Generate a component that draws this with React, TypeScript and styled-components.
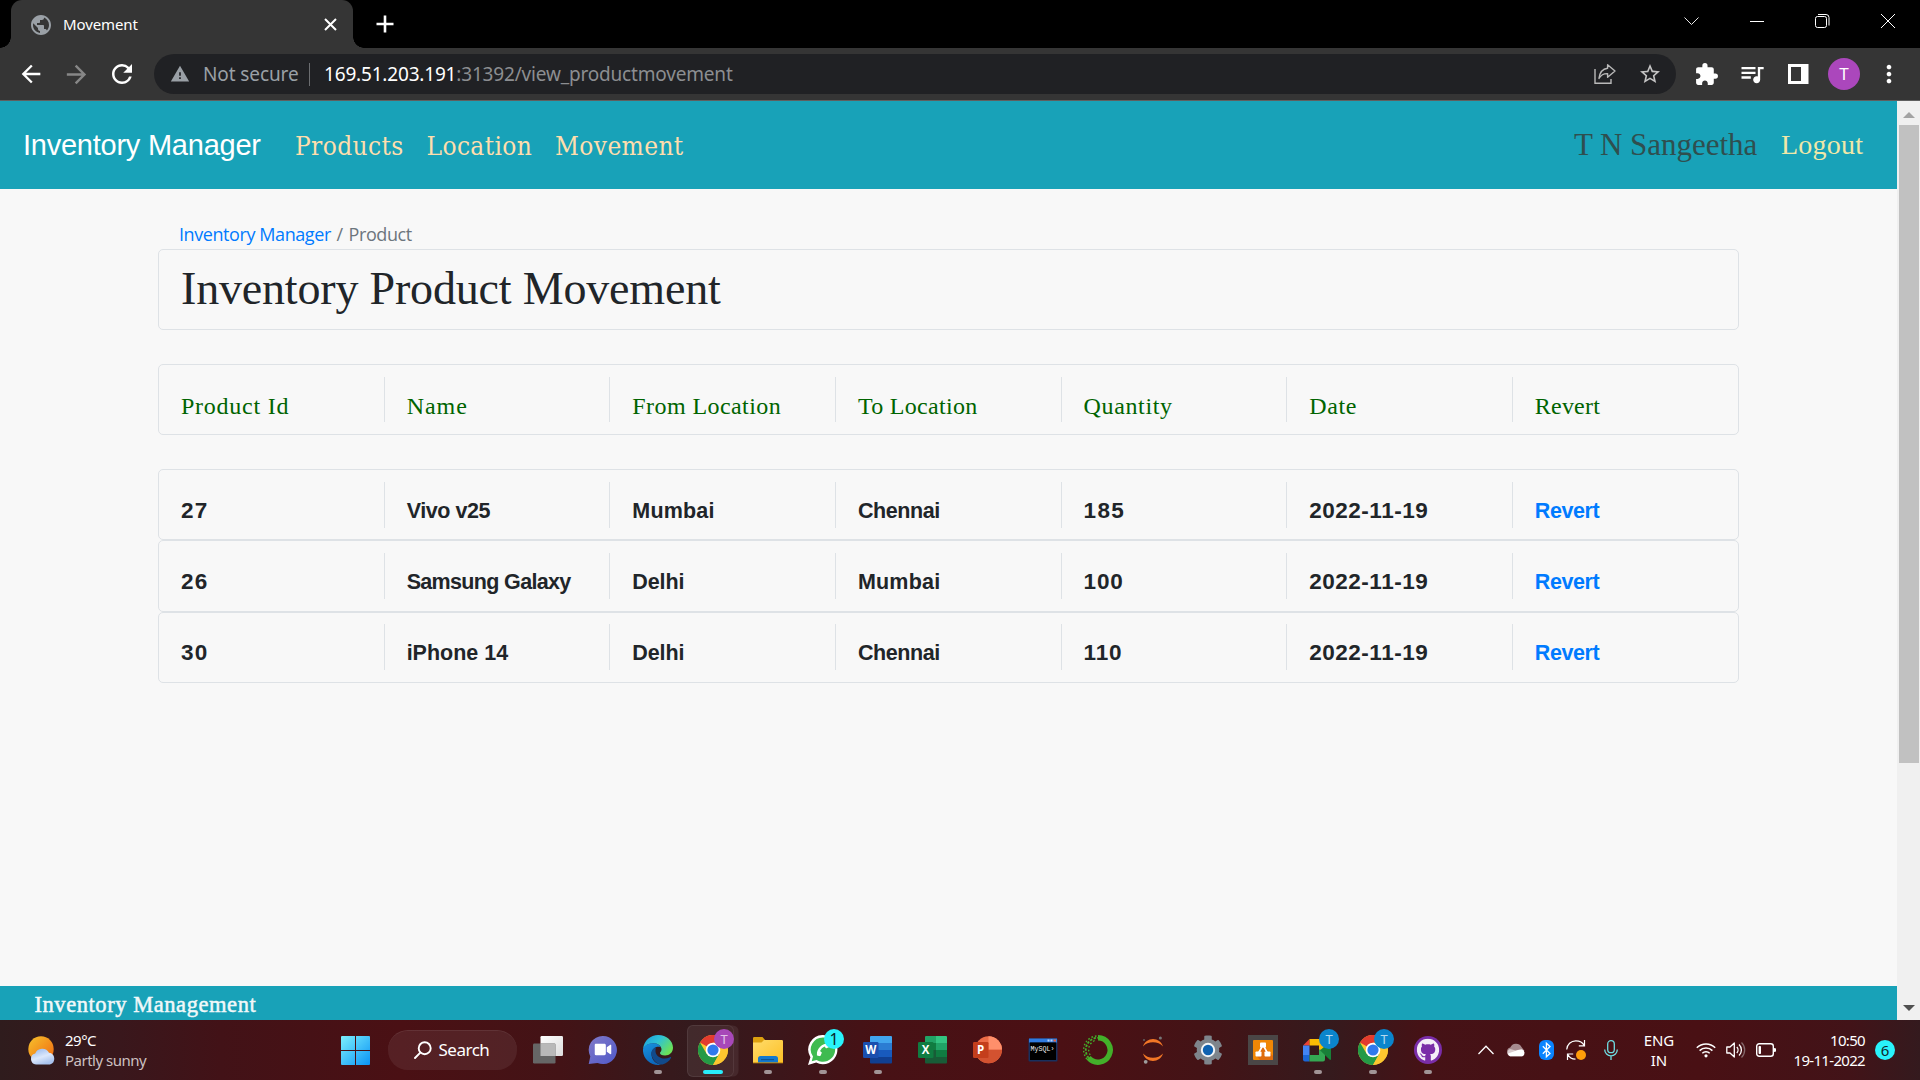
import React from 'react';
import styled, { createGlobalStyle } from 'styled-components';
import {
  MdArrowBack,
  MdArrowForward,
  MdExtension,
  MdMoreVert,
  MdPublic,
  MdQueueMusic,
  MdRefresh,
  MdStarBorder,
  MdWarning,
} from 'react-icons/md';
import { FaCog, FaGithub, FaPhoneAlt, FaVideo } from 'react-icons/fa';

const ui = '"Noto Sans", "Open Sans", sans-serif';
const serif = '"Liberation Serif", serif';
const slab = '"DejaVu Serif Condensed", "DejaVu Serif", serif';
const grotesk = '"Liberation Sans", sans-serif';

const GlobalStyle = createGlobalStyle`
  * { box-sizing: border-box; }
  html, body { margin: 0; padding: 0; overflow: hidden; background: #000; }
  svg { display: block; flex: none; }
`;

const Screen = styled.div`
  width: 1920px;
  height: 1080px;
  display: flex;
  flex-direction: column;
  overflow: hidden;
  font-family: ${ui};
`;

/* ---------- browser chrome ---------- */

const TabStrip = styled.div`
  height: 48px;
  flex: none;
  display: flex;
  background: #000;
  padding-left: 11px;
`;

const Tab = styled.div`
  position: relative;
  width: 342px;
  height: 48px;
  display: flex;
  align-items: center;
  padding: 1px 16px 0 18px;
  background: #353535;
  border-radius: 11px 11px 0 0;
  color: #fff;
  &::before,
  &::after {
    content: '';
    position: absolute;
    bottom: 0;
    width: 11px;
    height: 11px;
  }
  &::before {
    left: -11px;
    background: radial-gradient(circle at 0 0, transparent 10.5px, #353535 11px);
  }
  &::after {
    right: -11px;
    background: radial-gradient(circle at 100% 0, transparent 10.5px, #353535 11px);
  }
`;

const TabTitle = styled.span`
  flex: 1;
  margin-left: 10px;
  padding-bottom: 2px;
  font-size: 15px;
  letter-spacing: -0.1px;
  line-height: 20px;
`;

const NewTab = styled.div`
  display: flex;
  align-items: center;
  padding: 0 0 0 23px;
`;

const WindowButtons = styled.div`
  margin-left: auto;
  display: flex;
  align-items: flex-start;
  padding: 14px 25px 0 0;
  gap: 51px;
`;

const Toolbar = styled.div`
  height: 53px;
  flex: none;
  display: flex;
  align-items: center;
  background: #353535;
  border-bottom: 1px solid #5f5f5f;
  color: #fff;
`;

const NavIcons = styled.div`
  width: 154px;
  display: flex;
  align-items: center;
  padding-left: 17px;
  gap: 16.5px;
  color: #fff;
`;

const Omnibox = styled.div`
  width: 1522px;
  height: 40px;
  display: flex;
  align-items: center;
  padding-left: 16px;
  padding-right: 14px;
  border-radius: 20px;
  background: #202124;
  color: #9aa0a6;
  font-size: 19px;
  line-height: 26px;
  white-space: nowrap;
`;

const SecureLabel = styled.span`
  width: 106px;
  margin-left: 13px;
  letter-spacing: -0.1px;
`;

const Separator = styled.i`
  width: 1px;
  height: 23px;
  background: #6b6d70;
`;

const Url = styled.span`
  margin-left: 14px;
  flex: 1;
  letter-spacing: -0.18px;
  color: #8c8e91;
  b {
    font-weight: 400;
    color: #fff;
  }
`;

const OmniActions = styled.div`
  display: flex;
  align-items: center;
  gap: 22px;
  color: #c4c4c4;
`;

const Extensions = styled.div`
  flex: 1;
  display: flex;
  align-items: center;
  padding-left: 18px;
`;

const Spacer = styled.i<{ $w: number }>`
  width: ${(p) => p.$w}px;
  flex: none;
`;

const Avatar = styled.div`
  width: 32px;
  height: 32px;
  border-radius: 50%;
  background: #ab47bc;
  color: #fff;
  font: 17px/32px ${ui};
  text-align: center;
`;

/* ---------- page ---------- */

const Viewport = styled.div`
  height: 919px;
  flex: none;
  display: flex;
`;

const Page = styled.div`
  width: 1897px;
  display: flex;
  flex-direction: column;
  background: #f8f8f8;
`;

const Navbar = styled.nav`
  height: 88px;
  flex: none;
  display: flex;
  align-items: center;
  padding-left: 23px;
  background: #18a2b8;
  white-space: nowrap;
`;

const Brand = styled.a`
  width: 272px;
  color: #fff;
  font: 29px/36px ${grotesk};
  letter-spacing: -0.24px;
`;

const NavLink = styled.a<{ $w: number }>`
  width: ${(p) => p.$w}px;
  padding-top: 1px;
  color: #ffdead;
  font: 26px/36px ${slab};
  letter-spacing: 0.38px;
`;

const UserName = styled.span`
  margin-left: auto;
  width: 207px;
  color: #2f4f4f;
  font: 31px/36px ${serif};
  letter-spacing: -0.04px;
`;

const Logout = styled.a`
  width: 116px;
  color: #f0e8a8;
  font: 28px/36px ${serif};
  letter-spacing: 0.24px;
`;

const Main = styled.main`
  flex: 1;
  padding: 31px 158px 0;
`;

const Breadcrumb = styled.div`
  height: 29px;
  padding-left: 21px;
  color: #6c757d;
  font: 18px/28px 'Open Sans', sans-serif;
  letter-spacing: -0.42px;
  a {
    color: #007bff;
  }
  span {
    margin: 0 1.5px;
  }
`;

const TitleBox = styled.div`
  width: 1581px;
  height: 81px;
  display: flex;
  align-items: center;
  padding: 0 0 2px 22px;
  border: 1px solid #dee2e6;
  border-radius: 5px;
`;

const Title = styled.h1`
  margin: 0;
  color: #212529;
  font: 400 46px/60px ${serif};
  letter-spacing: -0.18px;
`;

const Row = styled.div<{ $h: number; $mt?: number; $pt?: number }>`
  width: 1581px;
  height: ${(p) => p.$h}px;
  margin-top: ${(p) => p.$mt ?? 0}px;
  padding-top: ${(p) => p.$pt ?? 12}px;
  display: grid;
  grid-template-columns: repeat(6, 225.65px) 1fr;
  align-items: start;
  border: 1px solid #dee2e6;
  border-radius: 5px;
`;

const Cell = styled.div<{ $ls?: number; $drop?: number; $size?: number }>`
  height: 46px;
  display: flex;
  align-items: center;
  padding: ${(p) => 11 + (p.$drop ?? 0)}px 0 0 22px;
  border-right: 1px solid #dee2e6;
  color: #212529;
  font: bold ${(p) => p.$size ?? 21.5}px/28px ${grotesk};
  letter-spacing: ${(p) => p.$ls ?? 0}px;
  white-space: nowrap;
  &:last-child {
    border-right: 0;
  }
`;

const HeadCell = styled(Cell)`
  height: 45px;
  padding-top: 13px;
  color: #006400;
  font: 24px/28px ${serif};
`;

const RevertLink = styled.a`
  color: #007bff;
`;

const PageFooter = styled.footer`
  height: 34px;
  flex: none;
  display: flex;
  align-items: center;
  padding: 4px 0 0 34.5px;
  background: #18a2b8;
  color: #f1f8f9;
  font: 22.5px/28px ${serif};
  letter-spacing: 0.56px;
  -webkit-text-stroke: 0.5px #f1f8f9;
`;

const Scrollbar = styled.div`
  width: 23px;
  display: flex;
  flex-direction: column;
  align-items: center;
  background: #f0f0f0;
`;

const ScrollArrow = styled.div<{ $down?: boolean }>`
  height: 24px;
  display: flex;
  align-items: center;
  padding-top: ${(p) => (p.$down ? 0 : 3)}px;
  margin-top: ${(p) => (p.$down ? 'auto' : 0)};
  padding-left: 1px;
`;

const Thumb = styled.div`
  width: 20px;
  height: 638px;
  margin-left: 1px;
  background: #c1c1c1;
`;

/* ---------- taskbar ---------- */

const Taskbar = styled.div`
  height: 60px;
  flex: none;
  display: flex;
  align-items: center;
  color: #fff;
  background: linear-gradient(
    90deg,
    #2f1c1d 0,
    #39171c 120px,
    #421217 220px,
    #4a1014 400px,
    #431316 560px,
    #341a1d 690px,
    #3c161a 780px,
    #471115 880px,
    #4b1014 1060px,
    #441316 1200px,
    #351a1d 1330px,
    #451216 1420px,
    #491014 1700px,
    #421318 1850px,
    #341a1e 1920px
  );
`;

const Weather = styled.div`
  width: 341px;
  display: flex;
  align-items: center;
  padding-left: 27px;
  gap: 9px;
`;

const Stack = styled.div<{ $align?: string; $w?: number; $ls?: number }>`
  width: ${(p) => (p.$w ? `${p.$w}px` : 'auto')};
  display: flex;
  flex-direction: column;
  text-align: ${(p) => p.$align ?? 'left'};
  font-size: 15px;
  line-height: 20px;
  letter-spacing: ${(p) => p.$ls ?? -0.5}px;
  white-space: nowrap;
`;

const Muted = styled.span`
  color: #cdc0c1;
`;

const SearchPill = styled.div`
  width: 129px;
  height: 40px;
  margin-left: 18px;
  display: flex;
  align-items: center;
  padding: 0 0 2px 26px;
  gap: 6.5px;
  border-radius: 20px;
  border-top: 1px solid rgba(255, 255, 255, 0.08);
  background: rgba(255, 255, 255, 0.07);
  font-size: 17px;
  letter-spacing: -0.5px;
`;

const AppList = styled.div`
  display: flex;
  margin-left: 3px;
`;

const AppSlot = styled.div<{ $active?: boolean }>`
  position: relative;
  width: 55px;
  height: 60px;
  display: flex;
  align-items: center;
  justify-content: center;
  &::before {
    content: '';
    display: ${(p) => (p.$active ? 'block' : 'none')};
    position: absolute;
    left: 2px;
    top: 5px;
    width: 45px;
    height: 50px;
    border-radius: 6px;
    border: 1px solid rgba(255, 255, 255, 0.08);
    background: rgba(255, 255, 255, 0.07);
    box-shadow: 5px 0 0 -0.5px rgba(255, 255, 255, 0.07);
  }
  > svg {
    position: relative;
  }
`;

const Indicator = styled.i<{ $active?: boolean }>`
  position: absolute;
  bottom: 6px;
  left: 50%;
  transform: translateX(-50%);
  width: ${(p) => (p.$active ? 20 : 8)}px;
  height: 4px;
  border-radius: 2px;
  background: ${(p) => (p.$active ? '#29ecfb' : '#a19496')};
`;

const Badge = styled.span<{ $bg: string; $fg: string; $size: number }>`
  position: absolute;
  left: 29px;
  top: 9px;
  width: 20px;
  height: 20px;
  border-radius: 50%;
  background: ${(p) => p.$bg};
  color: ${(p) => p.$fg};
  font: ${(p) => p.$size}px/20px ${ui};
  text-align: center;
`;

const Tray = styled.div`
  margin-left: auto;
  height: 60px;
  display: flex;
  align-items: center;
`;

const Count = styled.div`
  width: 20px;
  height: 20px;
  margin: 0 25px 0 10px;
  border-radius: 50%;
  background: #29f3fb;
  color: #10282a;
  font-size: 15px;
  line-height: 21px;
  text-align: center;
`;

/* ---------- drawings ---------- */

const ShareIcon = () => (
  <svg width="22" height="22" viewBox="0 0 22 22" fill="none" stroke="#b9b9b9" strokeWidth="1.4">
    <path d="M1 6V20.3H17V16" />
    <path d="M13.6 1.8 21 8 13.6 14.2V10.6C9.4 10.4 7 12 5 15.4 5.6 10 8.6 5.8 13.6 5.2Z" strokeLinejoin="round" />
  </svg>
);

const ChromeLogo = () => (
  <svg width="30" height="30" viewBox="0 0 30 30">
    <circle cx="15" cy="15" r="15" fill="#fdc62f" />
    <path d="M15 15 2 7.5A15 15 0 0 1 28 7.5L15 7.8Z" fill="#e33b2e" />
    <path d="M2 7.5A15 15 0 0 0 15 30L21.4 18.7 15 15 8.6 18.8Z" fill="#249a46" />
    <path d="M15 7.8H28.1A15 15 0 0 1 15 30L21.4 18.7Z" fill="#fdc62f" />
    <circle cx="15" cy="15" r="7.3" fill="#fff" />
    <circle cx="15" cy="15" r="5.6" fill="#3079ee" />
  </svg>
);

const TaskViewLogo = () => (
  <svg width="30" height="28" viewBox="0 0 30 28">
    <defs>
      <linearGradient id="tv" x1="0" y1="0" x2="1" y2="1">
        <stop offset="0" stopColor="#fff" />
        <stop offset="1" stopColor="#dcdcdc" />
      </linearGradient>
    </defs>
    <rect x="7.5" y="0" width="22.5" height="20" rx="1.2" fill="url(#tv)" />
    <rect x="0" y="7.5" width="22.5" height="20" rx="1.2" fill="#666" />
    <path d="M7.5 7.5H21.3a1.2 1.2 0 0 1 1.2 1.2V20H7.5Z" fill="#b9b9b9" />
  </svg>
);

const ChatLogo = () => (
  <svg width="30" height="30" viewBox="0 0 30 30">
    <defs>
      <linearGradient id="chat" x1="0" y1="0" x2="1" y2="1">
        <stop offset="0" stopColor="#8079c8" />
        <stop offset="1" stopColor="#5059c9" />
      </linearGradient>
    </defs>
    <path d="M15 1A14 14 0 1 1 9.500 27.900L0.700 29 2.300 21.500A14 14 0 0 1 15 1Z" fill="url(#chat)" />
    <FaVideo x="6.500" y="6" size={17} color="#fff" />
  </svg>
);

const EdgeLogo = () => (
  <svg width="30" height="30" viewBox="0 0 30 30">
    <defs>
      <linearGradient id="edgeTop" x1="0" y1="0" x2="1" y2="0.6">
        <stop offset="0" stopColor="#1a9bdc" />
        <stop offset="0.5" stopColor="#2fc2d6" />
        <stop offset="1" stopColor="#6be257" />
      </linearGradient>
      <linearGradient id="edgeBody" x1="0" y1="0" x2="0.4" y2="1">
        <stop offset="0" stopColor="#1893df" />
        <stop offset="1" stopColor="#0c68bd" />
      </linearGradient>
    </defs>
    <path d="M0 14C1 5.500 7.500 0 15.200 0 23.500 0 30 5.800 30 12.800 30 17.300 26.600 20.500 22 20.500 18.600 20.500 17 19.200 17 18 17 17.200 18.500 16.500 18.500 14.300 18.500 11.300 15.300 8.200 10.500 8.200 5.500 8.200 1.300 11 0 14Z" fill="url(#edgeTop)" />
    <path d="M0 14C1.200 10.600 5 8.200 9.800 8.200 14.500 8.200 17 10.200 17.900 12.200 13.500 10.800 8.500 13.500 8.500 19 8.500 24.500 12.500 29.300 18.500 29.600 8.500 31.500 -0.700 24 0 14Z" fill="url(#edgeBody)" />
    <path d="M13 12.400C8.500 13.600 7.500 18 9.200 22 11 26.600 15 29.800 19.500 29.400 23 28.600 26.400 26 28 23 28.300 22.200 27.700 21.900 27 22.300 20 25.500 13 22 12.500 16.500 12.400 15 12.500 13.600 13 12.400Z" fill="#114a8b" />
  </svg>
);

const FolderLogo = () => (
  <svg width="30" height="28" viewBox="0 0 30 28">
    <defs>
      <linearGradient id="folder" x1="0" y1="0" x2="1" y2="1">
        <stop offset="0" stopColor="#ffdc6b" />
        <stop offset="1" stopColor="#fdbf24" />
      </linearGradient>
    </defs>
    <path d="M0 2.200A1.200 1.200 0 0 1 1.200 1H9.500L12.500 4.500V8H0Z" fill="#dca00f" />
    <path d="M0 6.500H8.500L11 4H28.800A1.200 1.200 0 0 1 30 5.200V27H0Z" fill="url(#folder)" />
    <path d="M5 27V22.500A2.500 2.500 0 0 1 7.500 20H22.500A2.500 2.500 0 0 1 25 22.500V27Z" fill="#1279cf" />
    <rect x="8" y="23" width="13" height="1.200" fill="#0b5596" />
    <rect y="26.300" width="30" height="1" fill="#c98f13" />
  </svg>
);

const WhatsAppLogo = () => (
  <svg width="30" height="30" viewBox="0 0 30 30">
    <path d="M15.200 0A14.600 14.600 0 1 1 8.200 27.600L0 30 2.400 22.200A14.600 14.600 0 0 1 15.200 0Z" fill="#fff" />
    <path d="M15.200 2.400A12.200 12.200 0 1 1 8.600 25L3.700 26.300 5 21.600A12.200 12.200 0 0 1 15.200 2.400Z" fill="#3fbb50" />
    <g transform="rotate(90 15.200 14.700)">
      <FaPhoneAlt x="8.700" y="8.200" size={13} color="#fff" />
    </g>
  </svg>
);

const Letter = styled.text`
  font: bold 11.5px 'Open Sans', sans-serif;
  fill: #fff;
  text-anchor: middle;
`;

const WordLogo = () => (
  <svg width="29" height="28" viewBox="0 0 29 28">
    <path d="M7 1A1 1 0 0 1 8 0H28A1 1 0 0 1 29 1V7H7Z" fill="#41a5ee" />
    <rect x="7" y="7" width="22" height="7" fill="#2b7cd3" />
    <rect x="7" y="14" width="22" height="7" fill="#185abd" />
    <path d="M7 21H29V26.500A1 1 0 0 1 28 27.500H8A1 1 0 0 1 7 26.500Z" fill="#103f91" />
    <rect x="0" y="6" width="15.500" height="16" rx="1.200" fill="#1a4fae" />
    <Letter x="7.700" y="18.200">W</Letter>
  </svg>
);

const ExcelLogo = () => (
  <svg width="29" height="28" viewBox="0 0 29 28">
    <path d="M7 1A1 1 0 0 1 8 0H18V7H7Z" fill="#21a366" />
    <path d="M18 0H28A1 1 0 0 1 29 1V7H18Z" fill="#33c481" />
    <path d="M7 7H18V14H7Z" fill="#107c41" />
    <path d="M18 7H29V14H18Z" fill="#21a366" />
    <path d="M7 14H18V21H7Z" fill="#185c37" />
    <path d="M18 14H29V21H18Z" fill="#107c41" />
    <path d="M7 21H29V26.500A1 1 0 0 1 28 27.500H8A1 1 0 0 1 7 26.500Z" fill="#185c37" />
    <rect x="0" y="6" width="15.500" height="16" rx="1.200" fill="#107c41" />
    <Letter x="7.700" y="18.200">X</Letter>
  </svg>
);

const PowerPointLogo = () => (
  <svg width="29" height="28" viewBox="0 0 29 28">
    <circle cx="15.500" cy="13.700" r="13.500" fill="#ed6c47" />
    <path d="M15.500 0.200A13.500 13.500 0 0 1 29 13.700H15.500Z" fill="#ff8f6b" />
    <path d="M29 13.700A13.500 13.500 0 0 1 2 13.700Z" fill="#d35230" />
    <rect x="0" y="6" width="15.500" height="16" rx="1.200" fill="#c43e1c" />
    <Letter x="7.700" y="18.200">P</Letter>
  </svg>
);

const SqlText = styled.text`
  font: 7.5px 'Liberation Mono', monospace;
  fill: #f0f0f0;
`;

const MySqlLogo = () => (
  <svg width="30" height="24" viewBox="0 0 30 24">
    <rect x="0.500" y="0.500" width="29" height="23" rx="1" fill="#18305e" />
    <rect x="1" y="0.500" width="28" height="4" fill="#2f7be0" />
    <rect x="19.500" y="1.500" width="2" height="2" fill="#b9d4fa" />
    <rect x="22.500" y="1.500" width="2" height="2" fill="#b9d4fa" />
    <rect x="25.500" y="1.500" width="2.500" height="2" fill="#e8643c" />
    <rect x="2" y="4.500" width="26" height="17.500" fill="#000" />
    <SqlText x="2.600" y="12.500" textLength="24" lengthAdjust="spacingAndGlyphs">
      MySQL›
    </SqlText>
  </svg>
);

const AnacondaLogo = () => (
  <svg width="30" height="30" viewBox="0 0 30 30" fill="none" stroke="#43b02a">
    <path d="M15 2.800A12.200 12.200 0 1 1 5.600 22.800" strokeWidth="5.400" />
    <path d="M5.600 22.800A12.200 12.200 0 0 1 15 2.800" strokeWidth="1.800" strokeDasharray="2.300 1.500" />
    <path d="M3.900 24A14 14 0 0 1 14 1" strokeWidth="1.400" strokeDasharray="1.600 2" />
    <path d="M7.200 20A10 10 0 0 1 13 5" strokeWidth="1.300" strokeDasharray="1.800 2" />
  </svg>
);

const JupyterLogo = () => (
  <svg width="22" height="28" viewBox="0 0 22 28">
    <path d="M1 10.500C2.500 5.800 6.500 3 11 3S19.500 5.800 21 10.500C18.500 7.700 15 6.300 11 6.300S3.500 7.700 1 10.500Z" fill="#f37726" />
    <path d="M1 17.500C2.500 22.200 6.500 25 11 25S19.500 22.200 21 17.500C18.500 20.300 15 21.700 11 21.700S3.500 20.300 1 17.500Z" fill="#f37726" />
    <circle cx="18.400" cy="2" r="1.500" fill="#767677" />
    <circle cx="3.700" cy="25.800" r="1.900" fill="#9e9e9e" />
    <circle cx="2" cy="4" r="1" fill="#616262" />
  </svg>
);

const SettingsLogo = () => (
  <svg width="30" height="30" viewBox="0 0 30 30">
    <FaCog size={30} color="#7e858c" />
    <circle cx="15" cy="15" r="7.200" fill="#f2f4f6" />
    <circle cx="15" cy="15" r="5.200" fill="#0f62b0" />
  </svg>
);

const DrawioLogo = () => (
  <svg width="30" height="30" viewBox="0 0 30 30">
    <rect width="30" height="30" fill="#4a4646" />
    <rect x="5" y="5" width="20" height="20" rx="1" fill="#f08705" />
    <path d="M15 10 25 21V24a1 1 0 0 1-1 1H12l-3-4Z" fill="#df6c0c" />
    <path d="M15 10 10.500 18M15 10 19.500 18" stroke="#fff" strokeWidth="1.600" />
    <rect x="12" y="7.500" width="6" height="5" rx="0.800" fill="#fff" />
    <rect x="7.500" y="16.500" width="6" height="5" rx="0.800" fill="#fff" />
    <rect x="16.500" y="16.500" width="6" height="5" rx="0.800" fill="#fff" />
  </svg>
);

const MeetLogo = () => (
  <svg width="29" height="24" viewBox="0 0 29 24">
    <path d="M6.500 1V7.500H0Z" fill="#ea4335" />
    <path d="M6.500 1H20a2 2 0 0 1 2 2V11L16 14V7.500H6.500Z" fill="#fbbc04" />
    <path d="M0 7.500H6.500V17H0Z" fill="#4285f4" />
    <path d="M0 17H6.500V23.500H2a2 2 0 0 1-2-2Z" fill="#1a66d6" />
    <path d="M6.500 17H16V11.500L22 12.500V21.500a2 2 0 0 1-2 2H6.500Z" fill="#34a853" />
    <path d="M17 12.300 26.500 4.500c.7-.5 1.500-.2 1.500.7V21c0 .9-.8 1.200-1.500.6Z" fill="#188038" />
  </svg>
);

const GithubLogo = () => (
  <svg width="28" height="28" viewBox="0 0 28 28">
    <circle cx="14" cy="14" r="14" fill="#7a2da8" />
    <FaGithub x="2.500" y="2.500" size={23} color="#f4eef8" />
  </svg>
);

const PartlySunny = () => (
  <svg width="29" height="30" viewBox="0 0 29 30">
    <defs>
      <linearGradient id="sun" x1="0" y1="0" x2="1" y2="1">
        <stop offset="0" stopColor="#f6c22d" />
        <stop offset="1" stopColor="#f0660f" />
      </linearGradient>
      <linearGradient id="cloud" x1="0" y1="0" x2="0.500" y2="1">
        <stop offset="0" stopColor="#8fb3ec" />
        <stop offset="0.600" stopColor="#dce8fb" />
        <stop offset="1" stopColor="#a9c3ee" />
      </linearGradient>
    </defs>
    <circle cx="14" cy="14" r="12.700" fill="url(#sun)" />
    <path d="M9 29.500A5.600 5.600 0 0 1 8.200 18.500 7.600 7.600 0 0 1 22 17.800 6 6 0 0 1 23 29.500Z" fill="url(#cloud)" />
  </svg>
);

const WindowsLogo = () => (
  <svg width="29" height="29" viewBox="0 0 29 29">
    <defs>
      <linearGradient id="win" gradientUnits="userSpaceOnUse" x1="0" y1="0" x2="29" y2="29">
        <stop offset="0" stopColor="#7cf0fd" />
        <stop offset="1" stopColor="#0a93f5" />
      </linearGradient>
    </defs>
    <path d="M1 0H14V14H0V1A1 1 0 0 1 1 0ZM15 0H28A1 1 0 0 1 29 1V14H15ZM0 15H14V29H1A1 1 0 0 1 0 28ZM15 15H29V28A1 1 0 0 1 28 29H15Z" fill="url(#win)" />
  </svg>
);

const SearchGlyph = () => (
  <svg width="18" height="18" viewBox="0 0 18 18" fill="none" stroke="#fff" strokeWidth="1.900">
    <circle cx="10.700" cy="7.200" r="6" />
    <path d="M6.300 11.600 1 17" strokeLinecap="round" />
  </svg>
);

const BluetoothGlyph = () => (
  <svg width="15" height="20" viewBox="0 0 15 20">
    <rect width="15" height="20" rx="6" fill="#0a84ff" />
    <path d="M3.800 6.300 11 13.500 7.400 16.800V3.200L11 6.500 3.800 13.700" fill="none" stroke="#fff" strokeWidth="1.300" />
  </svg>
);

const CloudGlyph = () => (
  <svg width="20" height="14" viewBox="0 0 20 14">
    <path d="M4.500 13A4.300 4.300 0 0 1 4.300 4.600 6.200 6.200 0 0 1 15.500 4L18.500 8 10 13Z" fill="#a68b8f" />
    <path d="M4 13.200A3.900 3.900 0 0 1 3.800 6L10 7.500 15.600 5.900A4 4 0 0 1 16 13.200Z" fill="#d9cccd" />
    <path d="M4 13.200A3.500 3.500 0 0 1 2 10.500L12 7 16 6.800A3.400 3.400 0 0 1 16.500 13.200Z" fill="#fff" />
  </svg>
);

const SyncGlyph = () => (
  <svg width="20" height="20" viewBox="0 0 20 20" fill="none" stroke="#fff" strokeWidth="1.200">
    <path d="M.7 9.500C1 4.500 5 .8 9.800.8 13.500.8 16.800 2.600 18.200 5.500M18.500 0V5.800H12.800" />
    <path d="M1.500 20V14H7.200M1.800 14.400C3.300 17.400 6 19 9.500 19.200" />
    <circle cx="15" cy="15" r="5" fill="#ff9d0a" stroke="none" />
  </svg>
);

const MicGlyph = () => (
  <svg width="14" height="20" viewBox="0 0 14 20" fill="none" stroke="#6fdde2" strokeWidth="1.300">
    <rect x="3.700" y="0.700" width="6.600" height="12" rx="3.300" />
    <path d="M.7 9.500A6.300 6.300 0 0 0 13.300 9.500M7 16V20" />
  </svg>
);

const WifiGlyph = () => (
  <svg width="20" height="16" viewBox="0 0 20 16" fill="none" stroke="#fff" strokeWidth="1.500">
    <path d="M.8 5.800A13 13 0 0 1 19.200 5.800M3.600 8.600A9 9 0 0 1 16.400 8.600M6.300 11.300A5.200 5.200 0 0 1 13.700 11.300" />
    <circle cx="10" cy="13.800" r="1.600" fill="#fff" stroke="none" />
  </svg>
);

const VolumeGlyph = () => (
  <svg width="20" height="18" viewBox="0 0 20 18" fill="none" stroke="#fff" strokeWidth="1.300">
    <path d="M.8 6H4L8.300 2V16L4 12H.8Z" strokeLinejoin="round" />
    <path d="M10.800 6A4.300 4.300 0 0 1 10.800 12M13 3.500A7.500 7.500 0 0 1 13 14.500" />
    <path d="M15.500 1.500A10.500 10.500 0 0 1 15.500 16.500" stroke="#85686b" />
  </svg>
);

const BatteryGlyph = () => (
  <svg width="20" height="14" viewBox="0 0 20 14" fill="none" stroke="#fff" strokeWidth="1.400">
    <rect x="0.700" y="0.700" width="16.600" height="12.600" rx="2.500" />
    <rect x="2.600" y="3" width="2.400" height="8" rx="0.800" fill="#fff" stroke="none" />
    <path d="M18 5 20 5.500V8.500L18 9Z" fill="#fff" stroke="none" />
  </svg>
);

/* ---------- data ---------- */

const columns: [string, number][] = [
  ['Product Id', 0.75],
  ['Name', 0.97],
  ['From Location', 0.43],
  ['To Location', 0.3],
  ['Quantity', 0.64],
  ['Date', 0.63],
  ['Revert', 0.2],
];

type Movement = { h: number; mt?: number; pt?: number; drop?: number; cells: [string, number][] };

const movements: Movement[] = [
  {
    h: 71,
    mt: 34,
    cells: [['27', 1.2], ['Vivo v25', -0.44], ['Mumbai', 0.2], ['Chennai', -0.43], ['185', 1.3], ['2022-11-19', 0.52]],
  },
  {
    h: 72,
    drop: 1,
    cells: [['26', 1.2], ['Samsung Galaxy', -0.66], ['Delhi', -0.12], ['Mumbai', 0.2], ['100', 0.8], ['2022-11-19', 0.52]],
  },
  {
    h: 71,
    pt: 11,
    drop: 1,
    cells: [['30', 1.2], ['iPhone 14', 0], ['Delhi', -0.12], ['Chennai', -0.43], ['110', 0.8], ['2022-11-19', 0.52]],
  },
];

const isNumeric = (value: string) => /^[\d-]+$/.test(value);

type AppItem = {
  name: string;
  logo: React.ReactNode;
  open?: boolean;
  active?: boolean;
  badge?: { text: string; bg: string; fg: string; size: number };
};

const apps: AppItem[] = [
  { name: 'taskview', logo: <TaskViewLogo /> },
  { name: 'chat', logo: <ChatLogo /> },
  { name: 'edge', logo: <EdgeLogo />, open: true },
  { name: 'chrome', logo: <ChromeLogo />, open: true, active: true, badge: { text: 'T', bg: '#a748b8', fg: '#e3c3e8', size: 13 } },
  { name: 'explorer', logo: <FolderLogo />, open: true },
  { name: 'whatsapp', logo: <WhatsAppLogo />, open: true, badge: { text: '1', bg: '#29f3fb', fg: '#08282a', size: 16 } },
  { name: 'word', logo: <WordLogo />, open: true },
  { name: 'excel', logo: <ExcelLogo /> },
  { name: 'powerpoint', logo: <PowerPointLogo /> },
  { name: 'mysql', logo: <MySqlLogo /> },
  { name: 'anaconda', logo: <AnacondaLogo /> },
  { name: 'jupyter', logo: <JupyterLogo /> },
  { name: 'settings', logo: <SettingsLogo /> },
  { name: 'drawio', logo: <DrawioLogo /> },
  { name: 'meet', logo: <MeetLogo />, open: true, badge: { text: 'T', bg: '#0b85cc', fg: '#b5daf0', size: 13 } },
  { name: 'chrome-alt', logo: <ChromeLogo />, open: true, badge: { text: 'T', bg: '#0b85cc', fg: '#b5daf0', size: 13 } },
  { name: 'github', logo: <GithubLogo />, open: true },
];

export default function App() {
  return (
    <Screen>
      <GlobalStyle />
      <TabStrip>
        <Tab>
          <MdPublic size={24} color="#9aa0a6" />
          <TabTitle>Movement</TabTitle>
          <svg width="13" height="13" viewBox="0 0 13 13" stroke="#fff" strokeWidth="2">
            <path d="M1 1 12 12M12 1 1 12" />
          </svg>
        </Tab>
        <NewTab>
          <svg width="18" height="18" viewBox="0 0 18 18" stroke="#fff" strokeWidth="2.600">
            <path d="M9 .5V17.500M.5 9H17.500" />
          </svg>
        </NewTab>
        <WindowButtons>
          <svg width="15" height="15" viewBox="0 0 15 15" fill="none" stroke="#e8e8e8">
            <path d="M.5 3.500 7.500 10.500 14.500 3.500" />
          </svg>
          <svg width="14" height="15" viewBox="0 0 14 15" stroke="#fff">
            <path d="M0 7.500H14" />
          </svg>
          <svg width="15" height="15" viewBox="0 0 15 15" fill="none" stroke="#fff">
            <rect x="0.500" y="2.500" width="11" height="11" rx="2" />
            <path d="M3 .5H11A3 3 0 0 1 14 3.500V11.500" />
          </svg>
          <svg width="14" height="14" viewBox="0 0 14 14" stroke="#fff">
            <path d="M0 0 14 14M14 0 0 14" />
          </svg>
        </WindowButtons>
      </TabStrip>

      <Toolbar>
        <NavIcons>
          <MdArrowBack size={28} />
          <MdArrowForward size={29} color="#878787" />
          <MdRefresh size={30} />
        </NavIcons>
        <Omnibox>
          <MdWarning size={20} />
          <SecureLabel>Not secure</SecureLabel>
          <Separator />
          <Url>
            <b>169.51.203.191</b>:31392/view_productmovement
          </Url>
          <OmniActions>
            <ShareIcon />
            <MdStarBorder size={24} />
          </OmniActions>
        </Omnibox>
        <Extensions>
          <MdExtension size={25} />
          <Spacer $w={19} />
          <MdQueueMusic size={28} />
          <Spacer $w={22} />
          <svg width="21" height="20" viewBox="0 0 21 20">
            <path fillRule="evenodd" d="M0 0H20.500V20H0ZM3 3V17H13V3Z" fill="#fff" />
          </svg>
          <Spacer $w={19} />
          <Avatar>T</Avatar>
          <Spacer $w={15} />
          <MdMoreVert size={28} />
        </Extensions>
      </Toolbar>

      <Viewport>
        <Page>
          <Navbar>
            <Brand>Inventory Manager</Brand>
            <NavLink $w={131.5}>Products</NavLink>
            <NavLink $w={128.5}>Location</NavLink>
            <NavLink $w={140}>Movement</NavLink>
            <UserName>T N Sangeetha</UserName>
            <Logout>Logout</Logout>
          </Navbar>
          <Main>
            <Breadcrumb>
              <a>Inventory Manager</a> <span>/</span> Product
            </Breadcrumb>
            <TitleBox>
              <Title>Inventory Product Movement</Title>
            </TitleBox>
            <Row $h={71} $mt={34}>
              {columns.map(([label, ls]) => (
                <HeadCell key={label} $ls={ls}>
                  {label}
                </HeadCell>
              ))}
            </Row>
            {movements.map((m) => (
              <Row key={m.cells[0][0]} $h={m.h} $mt={m.mt} $pt={m.pt}>
                {m.cells.map(([value, ls], i) => (
                  <Cell key={i} $ls={ls} $drop={m.drop} $size={isNumeric(value) ? 22.5 : 21.5}>
                    {value}
                  </Cell>
                ))}
                <Cell $ls={-0.43} $drop={m.drop}>
                  <RevertLink>Revert</RevertLink>
                </Cell>
              </Row>
            ))}
          </Main>
          <PageFooter>Inventory Management</PageFooter>
        </Page>
        <Scrollbar>
          <ScrollArrow>
            <svg width="12" height="6" viewBox="0 0 12 6">
              <path d="M6 0 12 6H0Z" fill="#a3a3a3" />
            </svg>
          </ScrollArrow>
          <Thumb />
          <ScrollArrow $down>
            <svg width="12" height="6" viewBox="0 0 12 6">
              <path d="M0 0H12L6 6Z" fill="#505050" />
            </svg>
          </ScrollArrow>
        </Scrollbar>
      </Viewport>

      <Taskbar>
        <Weather>
          <PartlySunny />
          <Stack>
            <span>29°C</span>
            <Muted>Partly sunny</Muted>
          </Stack>
        </Weather>
        <WindowsLogo />
        <SearchPill>
          <SearchGlyph />
          Search
        </SearchPill>
        <AppList>
          {apps.map((a) => (
            <AppSlot key={a.name} $active={a.active}>
              {a.logo}
              {a.badge && (
                <Badge $bg={a.badge.bg} $fg={a.badge.fg} $size={a.badge.size}>
                  {a.badge.text}
                </Badge>
              )}
              {a.open && <Indicator $active={a.active} />}
            </AppSlot>
          ))}
        </AppList>
        <Tray>
          <svg width="16" height="10" viewBox="0 0 16 10" fill="none" stroke="#fff" strokeWidth="1.300">
            <path d="M.5 9 8 1.200 15.500 9" />
          </svg>
          <Spacer $w={12} />
          <CloudGlyph />
          <Spacer $w={13} />
          <BluetoothGlyph />
          <Spacer $w={12} />
          <SyncGlyph />
          <Spacer $w={18} />
          <MicGlyph />
          <Spacer $w={21} />
          <Stack $align="center" $w={40} $ls={-0.1}>
            <span>ENG</span>
            <span>IN</span>
          </Stack>
          <Spacer $w={17} />
          <WifiGlyph />
          <Spacer $w={10} />
          <VolumeGlyph />
          <Spacer $w={10} />
          <BatteryGlyph />
          <Stack $align="right" $w={89} $ls={-0.68}>
            <span>10:50</span>
            <span>19-11-2022</span>
          </Stack>
          <Count>6</Count>
        </Tray>
      </Taskbar>
    </Screen>
  );
}
